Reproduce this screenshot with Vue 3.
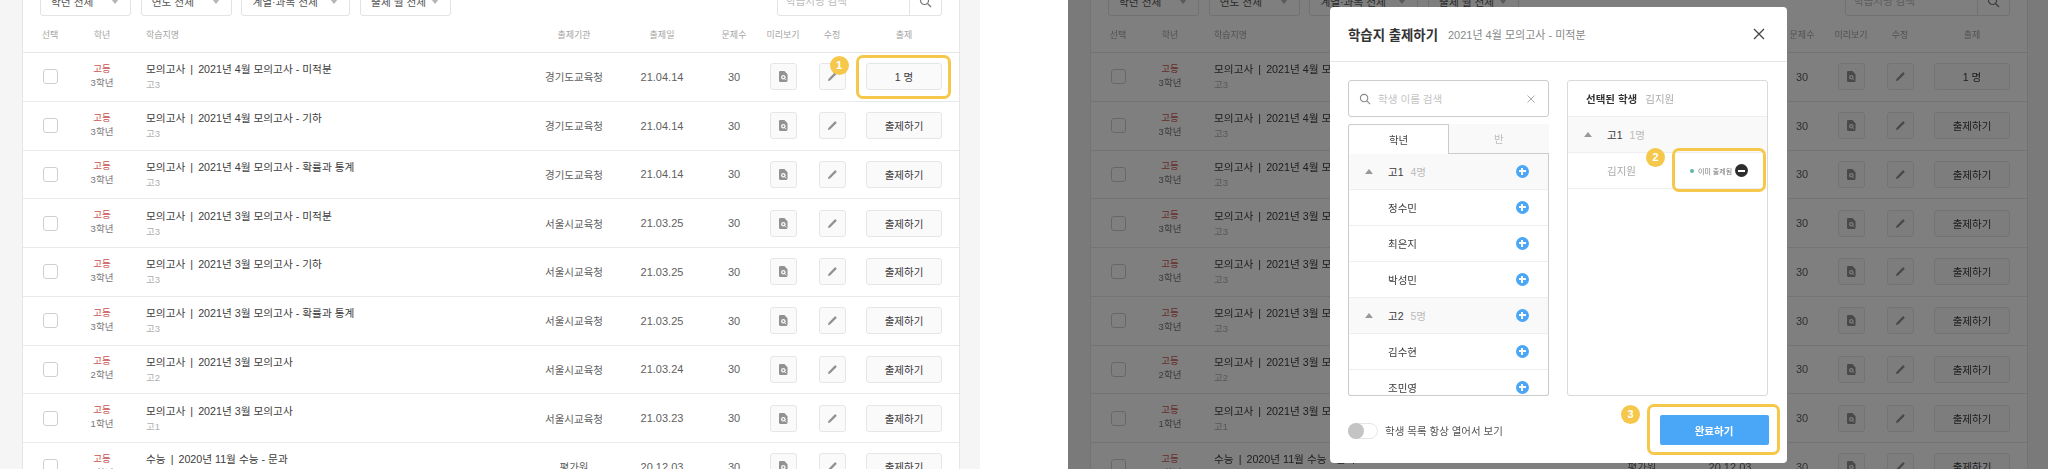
<script setup>
const rows = [
  { g: '3학년', t: '모의고사 | 2021년 4월 모의고사 - 미적분', s: '고3', o: '경기도교육청', d: '21.04.14', b: '1 명' },
  { g: '3학년', t: '모의고사 | 2021년 4월 모의고사 - 기하', s: '고3', o: '경기도교육청', d: '21.04.14', b: '출제하기' },
  { g: '3학년', t: '모의고사 | 2021년 4월 모의고사 - 확률과 통계', s: '고3', o: '경기도교육청', d: '21.04.14', b: '출제하기' },
  { g: '3학년', t: '모의고사 | 2021년 3월 모의고사 - 미적분', s: '고3', o: '서울시교육청', d: '21.03.25', b: '출제하기' },
  { g: '3학년', t: '모의고사 | 2021년 3월 모의고사 - 기하', s: '고3', o: '서울시교육청', d: '21.03.25', b: '출제하기' },
  { g: '3학년', t: '모의고사 | 2021년 3월 모의고사 - 확률과 통계', s: '고3', o: '서울시교육청', d: '21.03.25', b: '출제하기' },
  { g: '2학년', t: '모의고사 | 2021년 3월 모의고사', s: '고2', o: '서울시교육청', d: '21.03.24', b: '출제하기' },
  { g: '1학년', t: '모의고사 | 2021년 3월 모의고사', s: '고1', o: '서울시교육청', d: '21.03.23', b: '출제하기' },
  { g: '3학년', t: '수능 | 2020년 11월 수능 - 문과', s: '고3', o: '평가원', d: '20.12.03', b: '출제하기' }
]
const filters = [
  { label: '학년 전체', w: 91 },
  { label: '연도 전체', w: 91 },
  { label: '계열·과목 전체', w: 109 },
  { label: '출제 월 전체', w: 91 }
]
const heads = ['선택', '학년', '학습지명', '출제기관', '출제일', '문제수', '미리보기', '수정', '출제']
const studentRows = [
  { name: '고1', count: '4명', group: true },
  { name: '정수민' },
  { name: '최은지' },
  { name: '박성민' },
  { name: '고2', count: '5명', group: true },
  { name: '김수현' },
  { name: '조민영' }
]
</script>

<template>
  <div class="page">
    <section v-for="dim in [false, true]" :key="dim" class="screen">
      <div class="panel">
        <div class="toolbar">
          <div class="filters">
            <div v-for="f in filters" :key="f.label" class="select" :style="{ width: f.w + 'px' }">
              <span>{{ f.label }}</span><i class="caret"></i>
            </div>
          </div>
          <div class="search">
            <span class="search-text">학습지명 검색</span>
            <span class="search-btn">
              <svg width="13" height="13" viewBox="0 0 13 13" fill="none" stroke="#777" stroke-width="1.2"><circle cx="5.5" cy="5.5" r="4"/><path d="M8.5 8.5l3.500 3.500"/></svg>
            </span>
          </div>
        </div>
        <div class="grid head">
          <span v-for="(h, i) in heads" :key="h" :class="{ left: i === 2 }">{{ h }}</span>
        </div>
        <div v-for="r in rows" :key="r.t + r.o + r.d" class="grid row">
          <span><i class="check"></i></span>
          <span class="level"><b>고등</b><em>{{ r.g }}</em></span>
          <span class="left title"><b>{{ r.t.split(' | ')[0] }}<i class="pipe">|</i>{{ r.t.split(' | ')[1] }}</b><em>{{ r.s }}</em></span>
          <span class="cell kr">{{ r.o }}</span>
          <span class="cell">{{ r.d }}</span>
          <span class="cell">30</span>
          <span><button class="icon-btn">
            <svg width="9" height="11" viewBox="0 0 10 12"><path d="M1.200 0H6l3.500 3.500V10.500A1.400 1.400 0 0 1 8.100 12H1.200A1.200 1.200 0 0 1 0 10.800V1.200A1.200 1.200 0 0 1 1.200 0Z" fill="#929292"/><circle cx="4.800" cy="6.800" r="2.500" fill="#fafafa"/><circle cx="4.800" cy="6.800" r="1.100" fill="#929292"/><path d="M6.300 8.300L8 10" stroke="#fafafa" stroke-width="1"/></svg>
          </button></span>
          <span><button class="icon-btn">
            <svg width="9" height="9" viewBox="0 0 9 9"><path d="M0 9l.4-2.100L6.700.6a.7.7 0 0 1 1 0l.7.7a.7.7 0 0 1 0 1L2.100 8.600Z" fill="#929292"/></svg>
          </button></span>
          <span><button class="submit-btn">{{ r.b }}</button></span>
        </div>
      </div>

      <template v-if="!dim">
        <div class="callout c1"></div>
        <div class="badge b1">1</div>
      </template>

      <template v-if="dim">
        <div class="overlay"></div>
        <div class="modal">
          <header class="m-head">
            <strong>학습지 출제하기</strong>
            <span>2021년 4월 모의고사 - 미적분</span>
            <svg class="close" width="12" height="12" viewBox="0 0 12 12" stroke="#444" stroke-width="1.300"><path d="M1 1l10 10M11 1L1 11"/></svg>
          </header>
          <div class="m-body">
            <div class="col">
              <div class="name-search">
                <svg width="12" height="12" viewBox="0 0 13 13" fill="none" stroke="#888" stroke-width="1.200"><circle cx="5.500" cy="5.500" r="4"/><path d="M8.500 8.500l3.500 3.500"/></svg>
                <span class="ph">학생 이름 검색</span>
                <svg width="8" height="8" viewBox="0 0 8 8" stroke="#aaa" stroke-width="1"><path d="M.5.500l7 7M7.500.500l-7 7"/></svg>
              </div>
              <div class="tabs"><span class="tab on">학년</span><span class="tab">반</span></div>
              <div class="list">
                <div v-for="s in studentRows" :key="s.name" class="li" :class="{ group: s.group }">
                  <i v-if="s.group" class="up"></i>
                  <span class="nm">{{ s.name }}</span>
                  <span v-if="s.count" class="ct">{{ s.count }}</span>
                  <span class="plus"></span>
                </div>
              </div>
            </div>
            <div class="col picked">
              <div class="p-head"><b>선택된 학생</b><span>김지원</span></div>
              <div class="li group p-li"><i class="up"></i><span class="nm">고1</span><span class="ct">1명</span></div>
              <div class="li p-li p-item">
                <span class="nm dimmed">김지원</span>
                <span class="status"><i></i>이미 출제됨</span>
                <span class="minus"></span>
              </div>
            </div>
          </div>
          <footer class="m-foot">
            <label class="toggle-wrap"><span class="toggle"><i></i></span>학생 목록 항상 열어서 보기</label>
            <button class="done">완료하기</button>
          </footer>
        </div>
        <div class="callout c2"></div>
        <div class="callout c3"></div>
        <div class="badge b2">2</div>
        <div class="badge b3">3</div>
      </template>
    </section>
  </div>
</template>

<style>
html, body { margin: 0; background: #fff; overflow: hidden; }
</style>

<style scoped>
* { box-sizing: border-box; }
.page {
  display: flex; gap: 88px; width: 2048px; height: 469px; overflow: hidden;
  font-family: "Liberation Sans", "Noto Sans CJK KR", sans-serif; color: #333;
  filter: blur(.35px);
}
.screen {
  position: relative; flex: 0 0 980px; height: 469px; overflow: hidden;
  background: #f5f5f5; padding-left: 22px;
}
.panel {
  width: 938px; margin-top: -30px; padding-top: 16px; background: #fff;
  border-left: 1px solid #e6e6e6; border-right: 1px solid #e6e6e6;
}
.toolbar { display: flex; justify-content: space-between; padding: 0 17px; height: 30px; }
.filters { display: flex; gap: 9.700px; }
.select {
  display: flex; align-items: center; justify-content: space-between; height: 30px;
  padding: 0 11px 0 10px; border: 1px solid #e3e3e3; border-radius: 3px; font-size: 10.700px; color: #555; white-space: nowrap;
}
.caret { width: 0; height: 0; border: 4px solid transparent; border-top: 5px solid #b5b5b5; margin-top: 5px; }
.search { display: flex; width: 165px; height: 30px; border: 1px solid #e3e3e3; border-radius: 3px; }
.search-text { flex: 1; padding-left: 8px; font-size: 10.500px; line-height: 28px; color: #bbb; }
.search-btn { width: 32px; border-left: 1px solid #e3e3e3; display: flex; align-items: center; justify-content: center; }
.grid {
  display: grid;
  grid-template-columns: 54px 50px 403px 88px 88px 56px 42px 56px 88px;
  padding-right: 11px;
}
.grid > span { display: flex; flex-direction: column; align-items: center; justify-content: center; }
.grid > span.left { align-items: flex-start; padding-left: 19px; }
.head { height: 37px; border-bottom: 1px solid #e6e6e6; font-size: 9px; color: #a4a4a4; }
.row { height: 48.750px; border-bottom: 1px solid #e9e9e9; }
.check { width: 15px; height: 15px; border: 1px solid #cfcfcf; border-radius: 3px; background: #fff; }
.level { padding-bottom: 2px; }
.level b { font-weight: 400; font-size: 9.500px; line-height: 14px; color: #c9524f; }
.level em { font-style: normal; font-size: 9.500px; line-height: 14px; color: #777; }
.title b { font-weight: 400; font-size: 10.700px; line-height: 16px; color: #3c3c3c; white-space: nowrap; }
.pipe { font-style: normal; margin: 0 5px; }
.title em { font-style: normal; font-size: 9.500px; line-height: 14px; margin-top: 1px; color: #b0b0b0; }
.cell { font-size: 11px; color: #5f5f5f; }
.cell.kr { font-size: 10.500px; }
.icon-btn, .submit-btn {
  display: flex; align-items: center; justify-content: center; height: 27px; padding: 0;
  background: #fafafa; border: 1px solid #e6e6e6; border-radius: 3px; font: inherit;
}
.icon-btn { width: 27px; }
.submit-btn { width: 76px; font-size: 10.500px; color: #3c3c3c; }
.overlay { position: absolute; inset: 0; background: rgba(0, 0, 0, .5); }
.modal {
  position: absolute; left: 262px; top: 6.500px; width: 457px; height: 456.500px;
  background: #fff; border-radius: 4px; display: flex; flex-direction: column;
}
.m-head {
  display: flex; align-items: center; height: 55px; padding: 0 18px;
  border-bottom: 1px solid #e6e6e6;
}
.m-head strong { font-size: 13.400px; font-weight: 700; color: #333; }
.m-head span { margin-left: 10px; font-size: 11px; color: #888; }
.close { margin-left: auto; margin-right: 4px; }
.m-body { display: grid; grid-template-columns: 200.500px 201px; gap: 18.500px; padding: 18.500px 18px 0; height: 334.500px; }
.col { display: flex; flex-direction: column; height: 316px; min-height: 0; }
.name-search {
  display: flex; align-items: center; gap: 7px; height: 37px; padding: 0 13px 0 10px; flex: none;
  border: 1px solid #ccc; border-radius: 3px;
}
.ph { flex: 1; font-size: 10.600px; color: #c4c4c4; }
.tabs { display: flex; margin-top: 6.500px; height: 30px; flex: none; font-size: 10.500px; }
.tab {
  flex: 1; display: flex; align-items: center; justify-content: center; color: #bbb;
  background: #f9f9f9; border-bottom: 1px solid #ccc;
}
.tab.on { color: #444; background: #fff; border: 1px solid #ccc; border-bottom: 0; border-radius: 3px 0 0 0; }
.list {
  flex: 1; min-height: 0; overflow: hidden; border: 1px solid #ccc; border-top: 0;
  border-radius: 0 0 3px 3px;
}
.li {
  position: relative; display: flex; align-items: center; height: 36px; padding: 0 13px 0 39px;
  border-bottom: 1px solid #eee; font-size: 10.500px; color: #3c3c3c;
}
.li.group { background: #f9f9f9; }
.up {
  position: absolute; left: 16px; top: 15px; width: 0; height: 0;
  border: 4px solid transparent; border-top: 0; border-bottom: 5px solid #999;
}
.ct { margin-left: 7px; color: #bbb; }
.plus {
  position: relative; margin-left: auto; width: 13px; height: 13px; border-radius: 50%; background: #4aa7f7;
}
.plus::before, .minus::before { content: ""; position: absolute; left: 3px; top: 5.500px; width: 7px; height: 2px; background: #fff; }
.plus::after { content: ""; position: absolute; left: 5.500px; top: 3px; width: 2px; height: 7px; background: #fff; }
.li .plus { margin-right: 6px; }
.picked { border: 1px solid #d9d9d9; border-radius: 3px; }
.p-head { display: flex; align-items: center; gap: 8px; height: 36px; flex: none; padding-left: 18px; border-bottom: 1px solid #eee; font-size: 10.500px; }
.p-head b { font-weight: 700; color: #333; }
.p-head span { color: #aaa; }
.li.p-li { flex: none; padding-left: 39px; }
.li.p-item { border-bottom: 1px solid #eee; }
.dimmed { color: #aaa; }
.status { margin-left: 54px; display: flex; align-items: center; gap: 4px; font-size: 7px; color: #777; white-space: nowrap; }
.status i { width: 4px; height: 4px; border-radius: 50%; background: #5cb8a5; }
.minus { position: relative; margin-left: auto; margin-right: 6px; width: 13px; height: 13px; border-radius: 50%; background: #2e2e2e; }
.m-foot { flex: 1; display: flex; align-items: flex-start; justify-content: space-between; padding: 0 18.500px 0 18px; }
.toggle-wrap { display: flex; align-items: center; gap: 7px; margin-top: 26.500px; font-size: 10.500px; color: #555; }
.toggle { display: block; width: 30px; height: 16px; border: 1px solid #e6e6e6; border-radius: 8px; background: #fff; }
.toggle i { display: block; width: 16px; height: 16px; margin: -1px; border-radius: 50%; background: #c4c4c4; }
.done {
  width: 109px; height: 30px; margin-top: 19px; border: 0; border-radius: 2px; background: #4aa7f7;
  color: #fff; font: inherit; font-size: 10.500px; font-weight: 700;
}
.callout { position: absolute; border: 3px solid #f5c84b; border-radius: 7px; }
.c1 { left: 856px; top: 55px; width: 95px; height: 44px; }
.c2 { left: 604px; top: 148px; width: 94px; height: 44px; }
.c3 { left: 578.500px; top: 404px; width: 133.500px; height: 51px; }
.badge {
  position: absolute; width: 19px; height: 19px; border-radius: 50%; background: #f5c84b;
  display: flex; align-items: center; justify-content: center; color: #fff; font-size: 11px; font-weight: 700;
}
.b1 { left: 829.500px; top: 55.500px; }
.b2 { left: 578px; top: 147.500px; }
.b3 { left: 553px; top: 404.500px; }
</style>
